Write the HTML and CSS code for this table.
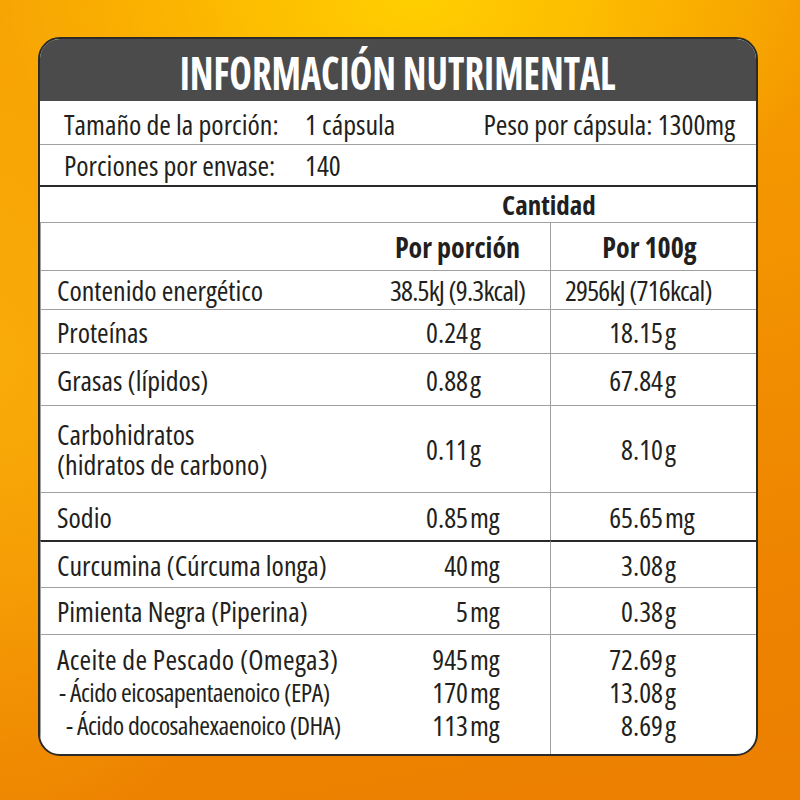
FILE: index.html
```html
<!DOCTYPE html>
<html lang="es">
<head>
<meta charset="utf-8">
<title>Información Nutrimental</title>
<link rel="stylesheet" href="styles.css">
</head>
<body>
<div class="page">
  <div class="card">
    <div class="title"><span class="title-text">INFORMACIÓN NUTRIMENTAL</span></div>
    <div class="info">
      <div class="info-row first">
        <span class="info-label">Tamaño de la porción:</span>
        <span class="info-value">1 cápsula</span>
        <span class="info-right">Peso por cápsula: 1300mg</span>
      </div>
      <div class="info-row">
        <span class="info-label">Porciones por envase:</span>
        <span class="info-value">140</span>
      </div>
    </div>
    <div class="nt">
      <div class="cell blank"></div>
      <div class="cell cant">Cantidad</div>

      <div class="cell"></div>
      <div class="cell hd">Por porción</div>
      <div class="cell hd hd3">Por 100g</div>

      <div class="cell lbl">Contenido energético</div>
      <div class="cell en2">38.5kJ (9.3kcal)</div>
      <div class="cell en3">2956kJ (716kcal)</div>

      <div class="cell lbl">Proteínas</div>
      <div class="cell v2"><span class="n">0.24</span><span class="u">g</span></div>
      <div class="cell v3"><span class="n">18.15</span><span class="u">g</span></div>

      <div class="cell lbl">Grasas (lípidos)</div>
      <div class="cell v2"><span class="n">0.88</span><span class="u">g</span></div>
      <div class="cell v3"><span class="n">67.84</span><span class="u">g</span></div>

      <div class="cell lbl multi">
        <div>Carbohidratos</div>
        <div>(hidratos de carbono)</div>
      </div>
      <div class="cell v2"><span class="n">0.11</span><span class="u">g</span></div>
      <div class="cell v3"><span class="n">8.10</span><span class="u">g</span></div>

      <div class="cell lbl">Sodio</div>
      <div class="cell v2"><span class="n">0.85</span><span class="u">mg</span></div>
      <div class="cell v3"><span class="n">65.65</span><span class="u">mg</span></div>

      <div class="cell lbl sep">Curcumina (Cúrcuma longa)</div>
      <div class="cell v2 sep"><span class="n">40</span><span class="u">mg</span></div>
      <div class="cell v3 sep"><span class="n">3.08</span><span class="u">g</span></div>

      <div class="cell lbl">Pimienta Negra (Piperina)</div>
      <div class="cell v2"><span class="n">5</span><span class="u">mg</span></div>
      <div class="cell v3"><span class="n">0.38</span><span class="u">g</span></div>

      <div class="cell lbl top">
        <div class="main-line">Aceite de Pescado (Omega3)</div>
        <div class="sub sub1">- Ácido eicosapentaenoico (EPA)</div>
        <div class="sub sub2">- Ácido docosahexaenoico (DHA)</div>
      </div>
      <div class="cell v2 top">
        <div><span class="n">945</span><span class="u">mg</span></div>
        <div><span class="n">170</span><span class="u">mg</span></div>
        <div><span class="n">113</span><span class="u">mg</span></div>
      </div>
      <div class="cell v3 top">
        <div><span class="n">72.69</span><span class="u">g</span></div>
        <div><span class="n">13.08</span><span class="u">g</span></div>
        <div><span class="n">8.69</span><span class="u">g</span></div>
      </div>
    </div>
  </div>
</div>
</body>
</html>
```

FILE: styles.css
```css
* { box-sizing: border-box; }

html, body {
  margin: 0;
  width: 800px;
  height: 800px;
  overflow: hidden;
}

body {
  font-family: "Open Sans", "DejaVu Sans Condensed", sans-serif;
  font-stretch: 75%;
  color: #231f20;
  background:
    radial-gradient(ellipse 420px 260px at 52% 0%, #ffcf00 0%, #fdbd00 40%, rgba(250,170,0,0) 100%),
    radial-gradient(ellipse 300px 500px at 0% 45%, rgba(250,175,10,0.9) 0%, rgba(250,175,10,0) 100%),
    linear-gradient(170deg, #f6a000 0%, #f39400 40%, #ee8400 75%, #ec7f00 100%);
}

.page {
  padding: 37px 0 0 38px;
}

.card {
  width: 720px;
  height: 719px;
  border: 2px solid #2a2a2a;
  border-radius: 22px;
  overflow: hidden;
  background: #fff;
  display: flex;
  flex-direction: column;
}

.title {
  height: 62px;
  background: #4b4b4b;
  display: flex;
  align-items: center;
  justify-content: center;
  padding-top: 4px;
}

.title-text {
  display: inline-block;
  color: #fff;
  font-weight: 700;
  font-size: 46px;
  line-height: 1;
  white-space: nowrap;
  transform: scaleX(0.83);
}

.info {
  border-bottom: 2px solid #2a2a2a;
  font-size: 28px;
}

.info-row {
  height: 40px;
  display: flex;
  align-items: center;
  padding: 0 21px 0 24px;
  white-space: nowrap;
}

.info-row.first {
  height: 44px;
  border-bottom: 1px solid #a0a0a0;
  padding-top: 2px;
}

.info-label {
  width: 241px;
}

.info-right {
  margin-left: auto;
}

.nt {
  flex: 1;
  display: grid;
  grid-template-columns: 325px 185px 1fr;
  grid-template-rows: 35px 48px 39px 44px 52px 87px 48px 47px 47px 1fr;
  font-size: 28px;
  white-space: nowrap;
}

.cell {
  border-top: 1px solid #a0a0a0;
  border-left: 1px solid #a0a0a0;
  display: flex;
  align-items: center;
  line-height: 30px;
}

.cell:nth-child(3n+1),
.cell.blank {
  border-left: none;
}

.nt .cell:nth-child(1),
.nt .cell:nth-child(2) {
  border-top: none;
}

.cant {
  grid-column: 2 / 4;
  border-left: none;
  justify-content: center;
  padding-right: 23px;
  font-weight: 700;
  font-size: 27px;
}

.hd {
  justify-content: center;
  font-weight: 700;
  font-size: 28px;
}

.hd3 {
  padding-right: 8px;
}

.lbl {
  padding-left: 16px;
}

.multi {
  flex-direction: column;
  align-items: flex-start;
  justify-content: center;
}

.en2,
.en3 {
  letter-spacing: -0.8px;
}

.en2 { padding-left: 25px; }
.en3 { padding-left: 14px; }

.v2 .n,
.v3 .n {
  display: inline-block;
  text-align: right;
}

.v2 .n { width: 103px; }
.v3 .n { width: 112px; }

.u { margin-left: 2px; }

.sep {
  border-top: 2px solid #2a2a2a;
}

.top {
  flex-direction: column;
  align-items: flex-start;
  justify-content: flex-start;
  padding-top: 8px;
  line-height: 33px;
}

.main-line {
  letter-spacing: 0.3px;
}

.sub {
  font-size: 26px;
  letter-spacing: -0.5px;
}

.sub1 { margin-left: 2px; }
.sub2 { margin-left: 9px; }
```
